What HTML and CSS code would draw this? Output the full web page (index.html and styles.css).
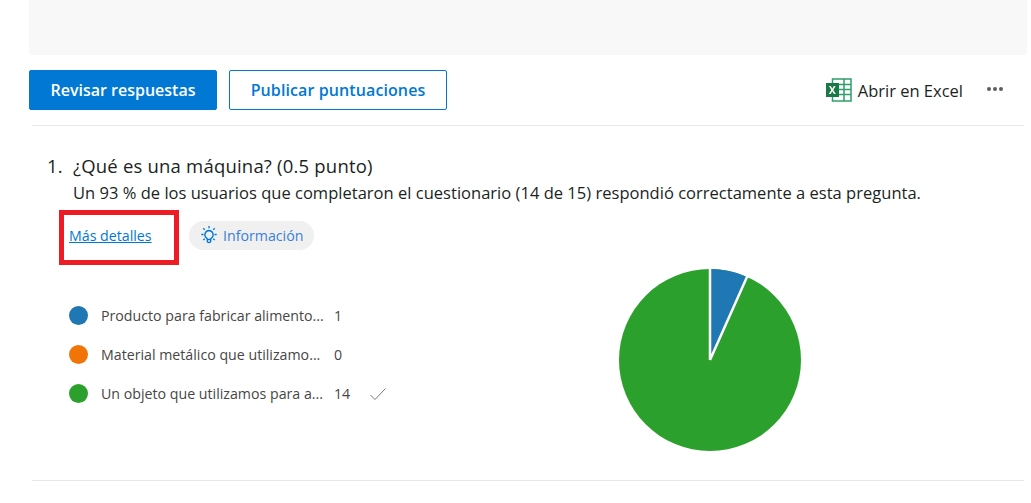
FILE: index.html
```html
<!DOCTYPE html>
<html lang="es">
<head>
  <meta charset="UTF-8">
  <meta name="viewport" content="width=device-width, initial-scale=1.0">
  <title>Respuestas</title>
  <link rel="stylesheet" href="styles.css">
</head>
<body>
  <div class="banner"></div>

  <div class="toolbar">
    <button class="btn btn-primary">Revisar respuestas</button>
    <button class="btn btn-outline">Publicar puntuaciones</button>
    <div class="toolbar-right">
      <svg class="excel-icon" width="26" height="24" viewBox="0 0 26 24">
        <rect x="6.500" y="1" width="18.500" height="22" fill="#fff" stroke="#2f9e6a" stroke-width="1.500"/>
        <path d="M12 6.500h13M12 11.500h13M12 16.500h13M18 1v22" stroke="#2f9e6a" stroke-width="1.500" fill="none"/>
        <rect x="0" y="5" width="13" height="14" fill="#1a7a45"/>
        <path d="M3 8l2.300 3.900L2.800 16h1.900l1.600-2.800L7.900 16h1.900L7.300 11.900 9.600 8H7.800L6.300 10.700 4.800 8z" fill="#fff"/>
      </svg>
      <span class="excel-label">Abrir en Excel</span>
      <div class="more"><i></i><i></i><i></i></div>
    </div>
  </div>

  <div class="question">
    <div class="question-title"><span class="question-num">1.</span>¿Qué es una máquina? (0.5 punto)</div>
    <div class="question-stat">Un 93 % de los usuarios que completaron el cuestionario (14 de 15) respondió correctamente a esta pregunta.</div>
    <div class="question-links">
      <div class="highlight"><a href="#">Más detalles</a></div>
      <div class="chip">
        <svg width="20" height="20" viewBox="0 0 20 20" fill="none" stroke="#0078d4" stroke-width="1.300">
          <path d="M10 5.500a4.200 4.200 0 0 0-2.400 7.600c.5.400.7.900.7 1.400h3.400c0-.5.200-1 .7-1.400A4.200 4.200 0 0 0 10 5.500z"/>
          <path d="M8.300 14.500v1.700c0 .7.600 1.300 1.700 1.300s1.700-.6 1.700-1.300v-1.700"/>
          <path d="M10 1v2.200M4.300 3.300l1.400 1.400M15.700 3.300l-1.400 1.400M2.300 9.500h2.200M15.500 9.500h2.200M4.300 15l1.400-1.300M15.700 15l-1.400-1.300"/>
        </svg>
        <span>Información</span>
      </div>
    </div>

    <div class="results">
      <div class="legend">
        <div class="legend-row">
          <span class="dot dot-blue"></span>
          <span class="legend-text">Producto para fabricar alimento...</span>
          <span class="legend-count">1</span>
        </div>
        <div class="legend-row">
          <span class="dot dot-orange"></span>
          <span class="legend-text">Material metálico que utilizamo...</span>
          <span class="legend-count">0</span>
        </div>
        <div class="legend-row">
          <span class="dot dot-green"></span>
          <span class="legend-text">Un objeto que utilizamos para a...</span>
          <span class="legend-count">14</span>
          <svg class="check" width="18" height="14" viewBox="0 0 18 14" fill="none" stroke="#777" stroke-width="1">
            <path d="M1.500 8l4.500 4.500L16.500 1.500"/>
          </svg>
        </div>
      </div>
      <svg class="pie" width="184" height="184" viewBox="0 0 184 184">
        <circle cx="92" cy="92" r="91" fill="#2ca02c"/>
        <path d="M92 92V1A91 91 0 0 1 129 8.900z" fill="#1f77b4"/>
        <path d="M92 92V0M92 92L129.400 8" stroke="#fff" stroke-width="2.500" fill="none"/>
      </svg>
    </div>
  </div>
</body>
</html>
```

FILE: styles.css
```css
body {
  margin: 0;
  background: #fff;
  font-family: "Open Sans", "Noto Sans", sans-serif;
  color: #201f1e;
  overflow: hidden;
}

.banner {
  height: 55px;
  margin: 0 4px 0 29px;
  background: #f8f8f8;
  border-radius: 0 0 4px 4px;
}

.toolbar {
  display: flex;
  align-items: center;
  gap: 12px;
  margin: 15px 7px 0 29px;
  height: 40px;
}

.btn {
  height: 40px;
  padding: 0;
  border-radius: 2px;
  font-family: inherit;
  font-size: 16px;
  font-weight: 600;
}

.btn-primary {
  width: 188px;
  color: #fff;
  background: #0078d4;
  border: 1px solid #0078d4;
}

.btn-outline {
  width: 218px;
  color: #0078d4;
  background: #fff;
  border: 1px solid #0078d4;
  letter-spacing: 0.1px;
}

.toolbar-right {
  display: flex;
  align-items: center;
  margin-left: auto;
}

.excel-icon {
  margin-right: 6px;
}

.excel-label {
  font-size: 16.500px;
}

.more {
  display: flex;
  gap: 2px;
  margin: -2px 21px 0 24px;
}

.more i {
  width: 4px;
  height: 4px;
  border-radius: 50%;
  background: #605e5c;
}

.question {
  margin: 15px 7px 0 32px;
  padding-top: 28px;
  height: 356px;
  box-sizing: border-box;
  border-top: 1px solid #e8e8e8;
  border-bottom: 1px solid #e8e8e8;
}

.question-title {
  display: flex;
  font-size: 18.500px;
  line-height: 24px;
  letter-spacing: 0.2px;
  padding-left: 15px;
}

.question-num {
  width: 26px;
}

.question-stat {
  font-size: 16.500px;
  line-height: 22px;
  letter-spacing: 0.02px;
  padding-left: 41px;
  margin-top: 4px;
}

.question-links {
  display: flex;
  align-items: center;
  gap: 10px;
  margin: 6px 0 0 27px;
}

.highlight {
  width: 120px;
  height: 55px;
  box-sizing: border-box;
  border: 5px solid #ed1c24;
  display: flex;
  align-items: center;
  padding: 0 0 4px 5px;
}

.highlight a {
  font-size: 14.200px;
  color: #0078d4;
}

.chip {
  display: flex;
  align-items: center;
  gap: 4px;
  width: 125px;
  height: 29px;
  box-sizing: border-box;
  padding-left: 10px;
  margin-top: -5px;
  border-radius: 15px;
  background: #f0f0f0;
  color: #3a7fd5;
  font-size: 14.200px;
}

.results {
  display: flex;
  margin-top: 3px;
}

.legend {
  width: 350px;
  margin: 28px 0 0 37px;
}

.legend-row {
  display: flex;
  align-items: center;
  height: 39px;
  font-size: 14.200px;
  color: #484644;
}

.dot {
  width: 19px;
  height: 19px;
  border-radius: 50%;
  margin-right: 13px;
  flex: none;
}

.dot-blue { background: #1f77b4; }
.dot-orange { background: #f07408; }
.dot-green { background: #2ca02c; }

.legend-text {
  width: 222px;
  margin-right: 11px;
  white-space: nowrap;
}

.legend-count {
  width: 35px;
}

.pie {
  margin-left: 198.500px;
}
```
